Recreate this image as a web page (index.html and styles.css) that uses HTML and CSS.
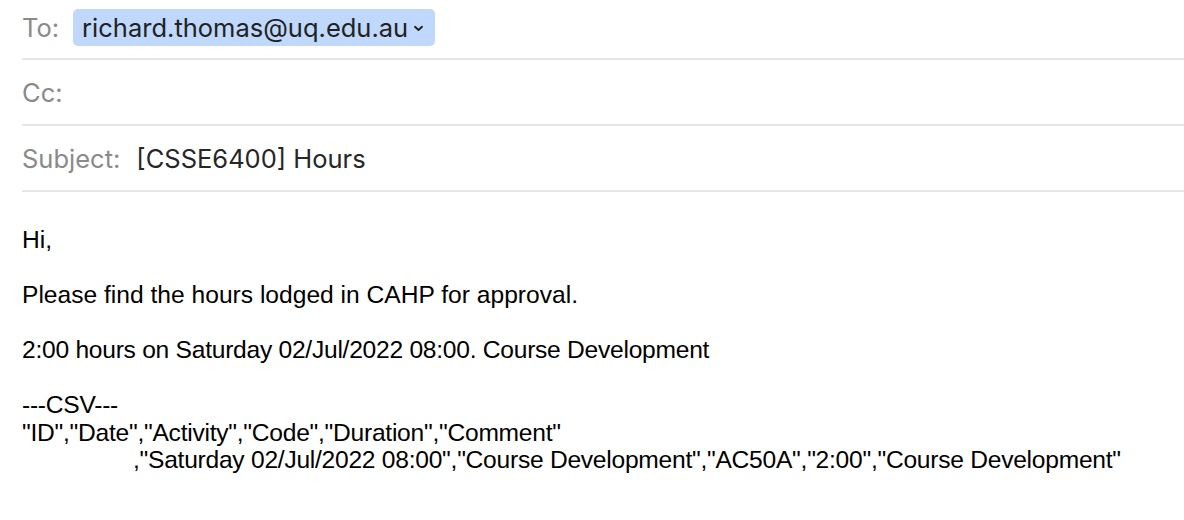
FILE: index.html
```html
<!DOCTYPE html>
<html>
<head>
<meta charset="utf-8">
<link rel="stylesheet" href="styles.css">
</head>
<body>
<div class="compose">
  <div class="field field-to">
    <span class="label">To:</span>
    <span class="chip">richard.thomas@uq.edu.au<svg class="chev" width="11" height="7" viewBox="0 0 11 7"><path d="M2 1.8 L5.5 5 L9 1.8" fill="none" stroke="#222" stroke-width="1.9" stroke-linecap="round" stroke-linejoin="round"/></svg></span>
  </div>
  <div class="field">
    <span class="label">Cc:</span>
  </div>
  <div class="field">
    <span class="label">Subject:</span>
    <span class="value">[CSSE6400] Hours</span>
  </div>
  <div class="body">
    <p>Hi,</p>
    <p>Please find the hours lodged in CAHP for approval.</p>
    <p class="tight">2:00 hours on Saturday 02/Jul/2022 08:00. Course Development</p>
    <p class="tight">---CSV---<br>"ID","Date","Activity","Code","Duration","Comment"<br><span class="indent">,"Saturday 02/Jul/2022 08:00","Course Development","AC50A","2:00","Course Development"</span></p>
  </div>
</div>
</body>
</html>
```

FILE: styles.css
```css
html, body {
  margin: 0;
  padding: 0;
  background: #ffffff;
}
.compose {
  padding-left: 22px;
}
.field {
  display: flex;
  align-items: center;
  gap: 16px;
  height: 64px;
  border-bottom: 2px solid #e6e6e6;
  font-family: Inter, "Noto Sans", sans-serif;
  font-size: 25.5px;
}
.field-to {
  height: 54px;
  padding-bottom: 4px;
  gap: 14px;
}
.label {
  color: #8a8a8a;
}
.value {
  color: #262626;
}
.chip {
  display: inline-flex;
  align-items: center;
  background: #bfd8fb;
  color: #222;
  border-radius: 5px;
  padding: 0 11px 0 9px;
  height: 37px;
}
.chev {
  margin-left: 5px;
  margin-top: 3px;
}
.body {
  font-family: "Liberation Sans", Arial, sans-serif;
  font-size: 24.6px;
  line-height: 27.5px;
  color: #000;
  padding-top: 34px;
}
.body p {
  margin: 0 0 27.5px 0;
}
.body p.tight {
  letter-spacing: -0.26px;
}
.indent {
  padding-left: 111px;
}
```
